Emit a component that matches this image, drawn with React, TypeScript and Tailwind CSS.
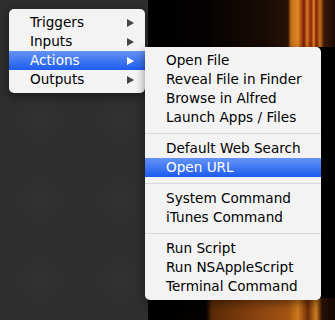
import React from 'react';

type Item = { label: string; arrow?: boolean; active?: boolean } | 'sep';

const mainItems: Item[] = [
  { label: 'Triggers', arrow: true },
  { label: 'Inputs', arrow: true },
  { label: 'Actions', arrow: true, active: true },
  { label: 'Outputs', arrow: true },
];

const subItems: Item[] = [
  { label: 'Open File' },
  { label: 'Reveal File in Finder' },
  { label: 'Browse in Alfred' },
  { label: 'Launch Apps / Files' },
  'sep',
  { label: 'Default Web Search' },
  { label: 'Open URL', active: true },
  'sep',
  { label: 'System Command' },
  { label: 'iTunes Command' },
  'sep',
  { label: 'Run Script' },
  { label: 'Run NSAppleScript' },
  { label: 'Terminal Command' },
];

const Arrow = ({ white }: { white?: boolean }) => (
  <svg width="7" height="8" viewBox="0 0 7 8" className="shrink-0">
    <path d="M0 0 L7 4 L0 8 Z" fill={white ? '#ffffff' : '#444444'} />
  </svg>
);

const MenuRows = ({ items }: { items: Item[] }) => (
  <>
    {items.map((it, i) =>
      it === 'sep' ? (
        <div key={i} className="h-[12px] flex items-center">
          <div className="w-full h-px bg-[#d9d9d9]" />
        </div>
      ) : (
        <div
          key={i}
          className={`h-[19px] flex items-center justify-between pl-[21px] pr-[11px] ${
            it.active
              ? 'bg-[linear-gradient(to_bottom,#6593f6,#1c5ced)] text-white'
              : 'text-black'
          }`}
        >
          <span className="leading-none">{it.label}</span>
          {it.arrow && <Arrow white={it.active} />}
        </div>
      )
    )}
  </>
);

export default function App() {
  return (
    <div className="relative w-[335px] h-[320px] overflow-hidden flex font-['DejaVu_Sans',sans-serif] text-[13.6px]">
      <div className="w-[148px] h-full bg-[#2e2e2e] bg-[radial-gradient(circle_at_center,#323232_0px,#2f2f2f_18px,transparent_34px)] bg-[length:80px_80px]" />
      <div className="flex-1 h-full flex flex-col bg-black">
        <div className="h-[47px] bg-[linear-gradient(to_right,#000_0px,#050302_60px,#1a0c05_120px,#2a1206_140px,#c46c18_143px,#e08a24_150px,#7a1a08_156px,#d77a1c_159px,#8a200a_163px,#e28a25_166px,#7a1a08_168px,#c8701a_172px,#3a1808_176px,#1a0a04_187px)]" />
        <div className="flex-1" />
        <div className="h-[22px] bg-[linear-gradient(to_right,#000_0px,#050200_58px,#5a2a06_64px,#8a4410_110px,#a45412_140px,#cf7a1c_150px,#6a2a08_160px,#d08020_168px,#2a1004_174px,#120804_187px)]" />
      </div>

      <div className="absolute left-[9px] top-[9px] w-[136px] pt-[4px] pb-[4px] rounded-[5px] bg-[#f3f3f3] shadow-[0_3px_10px_rgba(0,0,0,0.45)]">
        <MenuRows items={mainItems} />
      </div>

      <div className="absolute left-[145px] top-[47px] w-[176px] pt-[4px] pb-[4px] rounded-[5px] rounded-tl-none bg-[#f3f3f3] shadow-[0_3px_10px_rgba(0,0,0,0.45)]">
        <MenuRows items={subItems} />
      </div>
    </div>
  );
}
